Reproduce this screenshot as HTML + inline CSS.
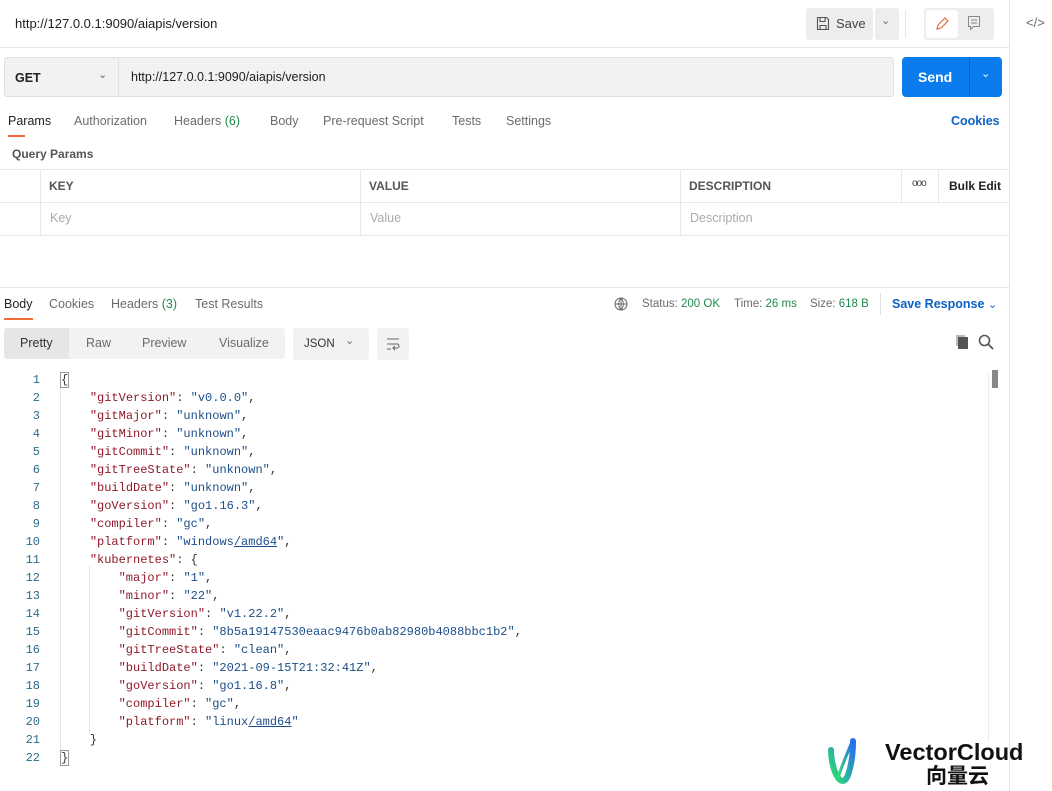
<!DOCTYPE html>
<html><head><meta charset="utf-8"><style>
*{box-sizing:border-box;margin:0;padding:0}
body{width:1052px;height:791px;background:#fff;font-family:"Liberation Sans",sans-serif;font-size:12.5px;color:#212121;position:relative;overflow:hidden}
.a{position:absolute;white-space:nowrap}
.g{color:#6b6b6b}
.code{font-family:"Liberation Mono",monospace;font-size:12px}
.k{color:#8f1a2a}.v{color:#1c4e88}
</style></head><body>
<div class="a" style="left:1009px;top:0;width:1px;height:791px;background:#e6e6e6"></div>
<div class="a g" style="left:1026px;top:15px;font-size:13px">&lt;/&gt;</div>
<div class="a" style="left:15px;top:16px;font-size:13px;color:#212121">http://127.0.0.1:9090/aiapis/version</div>
<div class="a" style="left:806px;top:8px;width:67px;height:32px;background:#ededed;border-radius:3px"></div>
<svg class="a" style="left:816px;top:16px" width="14" height="15" viewBox="0 0 14 15"><path d="M1.5 1.5h9l2 2v10h-11z M4 1.5v4h5v-4 M4 13.5v-4h6v4" fill="none" stroke="#555" stroke-width="1.1"/></svg>
<div class="a" style="left:836px;top:16px;color:#444;font-size:13px">Save</div>
<div class="a" style="left:875px;top:8px;width:24px;height:32px;background:#ededed;border-radius:3px"></div>
<div class="a g" style="left:881px;top:14px;font-size:11px">&#8964;</div>
<div class="a" style="left:905px;top:10px;width:1px;height:28px;background:#e6e6e6"></div>
<div class="a" style="left:924px;top:8px;width:70px;height:32px;background:#ededed;border-radius:3px"></div>
<div class="a" style="left:926px;top:10px;width:32px;height:28px;background:#fff;border-radius:3px"></div>
<svg class="a" style="left:934px;top:16px" width="16" height="16"><path d="M3 13l1-4 7-7 3 3-7 7z" fill="none" stroke="#e0703a" stroke-width="1.2"/></svg>
<svg class="a" style="left:967px;top:15px" width="14" height="16"><path d="M1.5 1.5h11v10h-6l-3 3v-3h-2z M4 5h6 M4 8h6" fill="none" stroke="#888" stroke-width="1"/></svg>
<div class="a" style="left:0;top:47px;width:1009px;height:1px;background:#e6e6e6"></div>
<div class="a" style="left:4px;top:57px;width:890px;height:40px;background:#f2f2f2;border:1px solid #e0e0e0;border-radius:3px"></div>
<div class="a" style="left:118px;top:58px;width:1px;height:38px;background:#e0e0e0"></div>
<div class="a" style="left:15px;top:71px;font-weight:bold;font-size:12.5px">GET</div>
<div class="a g" style="left:98px;top:68px;font-size:11px">&#8964;</div>
<div class="a" style="left:131px;top:70px;font-size:12.5px">http://127.0.0.1:9090/aiapis/version</div>
<div class="a" style="left:902px;top:57px;width:100px;height:40px;background:#0a7ced;border-radius:4px"></div>
<div class="a" style="left:969px;top:57px;width:1px;height:40px;background:#0664c8"></div>
<div class="a" style="left:918px;top:69px;color:#fff;font-weight:bold;font-size:14px">Send</div>
<div class="a" style="left:981px;top:67px;color:#fff;font-size:11px">&#8964;</div>
<div class="a" style="left:8px;top:114px">Params</div>
<div class="a" style="left:8px;top:135px;width:17px;height:2px;background:#f26b3a"></div>
<div class="a g" style="left:74px;top:114px">Authorization</div>
<div class="a g" style="left:174px;top:114px">Headers <span style="color:#1f8b4c">(6)</span></div>
<div class="a g" style="left:270px;top:114px">Body</div>
<div class="a g" style="left:323px;top:114px">Pre-request Script</div>
<div class="a g" style="left:452px;top:114px">Tests</div>
<div class="a g" style="left:506px;top:114px">Settings</div>
<div class="a" style="left:951px;top:114px;color:#0b62c4;font-weight:bold">Cookies</div>
<div class="a" style="left:12px;top:147px;font-weight:bold;color:#555;font-size:12px">Query Params</div>
<div class="a" style="left:0;top:169px;width:1009px;height:67px;border-top:1px solid #e6e6e6;border-bottom:1px solid #e6e6e6"></div>
<div class="a" style="left:0;top:202px;width:1009px;height:1px;background:#e6e6e6"></div>
<div class="a" style="left:40px;top:169px;width:1px;height:67px;background:#e6e6e6"></div>
<div class="a" style="left:360px;top:169px;width:1px;height:67px;background:#e6e6e6"></div>
<div class="a" style="left:680px;top:169px;width:1px;height:67px;background:#e6e6e6"></div>
<div class="a" style="left:901px;top:169px;width:1px;height:33px;background:#e6e6e6"></div>
<div class="a" style="left:938px;top:169px;width:1px;height:33px;background:#e6e6e6"></div>
<div class="a" style="left:49px;top:179px;color:#555;font-weight:bold;font-size:12px">KEY</div>
<div class="a" style="left:369px;top:179px;color:#555;font-weight:bold;font-size:12px">VALUE</div>
<div class="a" style="left:689px;top:179px;color:#555;font-weight:bold;font-size:12px">DESCRIPTION</div>
<div class="a" style="left:912px;top:178px;color:#444;font-size:10px;letter-spacing:-1px">ooo</div>
<div class="a" style="left:949px;top:179px;font-weight:bold;font-size:12px">Bulk Edit</div>
<div class="a" style="left:50px;top:211px;color:#aaa">Key</div>
<div class="a" style="left:370px;top:211px;color:#aaa">Value</div>
<div class="a" style="left:690px;top:211px;color:#aaa">Description</div>
<div class="a" style="left:0;top:287px;width:1009px;height:1px;background:#e6e6e6"></div>
<div class="a" style="left:4px;top:297px">Body</div>
<div class="a" style="left:4px;top:318px;width:29px;height:2px;background:#f26b3a"></div>
<div class="a g" style="left:49px;top:297px">Cookies</div>
<div class="a g" style="left:111px;top:297px">Headers <span style="color:#1f8b4c">(3)</span></div>
<div class="a g" style="left:195px;top:297px">Test Results</div>
<svg class="a" style="left:614px;top:297px" width="14" height="14"><circle cx="7" cy="7" r="6" fill="none" stroke="#666"/><path d="M1 7h12M7 1v12M7 1c-3 3-3 9 0 12M7 1c3 3 3 9 0 12" fill="none" stroke="#666" stroke-width=".9"/></svg>
<div class="a g" style="left:642px;top:298px;font-size:11.5px">Status: <span style="color:#1f8b4c">200 OK</span></div>
<div class="a g" style="left:734px;top:298px;font-size:11.5px">Time: <span style="color:#1f8b4c">26 ms</span></div>
<div class="a g" style="left:810px;top:298px;font-size:11.5px">Size: <span style="color:#1f8b4c">618 B</span></div>
<div class="a" style="left:880px;top:293px;width:1px;height:22px;background:#e0e0e0"></div>
<div class="a" style="left:892px;top:297px;color:#0b62c4;font-weight:bold">Save Response <span style="font-weight:normal;font-size:11px">&#8964;</span></div>
<div class="a" style="left:4px;top:328px;width:281px;height:31px;background:#f2f2f2;border-radius:3px"></div>
<div class="a" style="left:4px;top:328px;width:65px;height:31px;background:#e6e6e6;border-radius:3px 0 0 3px"></div>
<div class="a" style="left:20px;top:336px;color:#333">Pretty</div>
<div class="a g" style="left:86px;top:336px">Raw</div>
<div class="a g" style="left:142px;top:336px">Preview</div>
<div class="a g" style="left:219px;top:336px">Visualize</div>
<div class="a" style="left:293px;top:328px;width:76px;height:32px;background:#f2f2f2;border-radius:3px"></div>
<div class="a" style="left:304px;top:338px;font-size:11.5px;color:#333">JSON</div>
<div class="a g" style="left:345px;top:334px;font-size:11px">&#8964;</div>
<div class="a" style="left:377px;top:328px;width:32px;height:32px;background:#f2f2f2;border-radius:3px"></div>
<svg class="a" style="left:385px;top:336px" width="16" height="16"><path d="M2 3h12M2 8h10a2 2 0 0 1 0 4H8M10 10l-2 2 2 2M2 13h4" fill="none" stroke="#666" stroke-width="1.1"/></svg>
<svg class="a" style="left:954px;top:334px" width="16" height="16"><rect x="2" y="1" width="9" height="11" fill="#bbb"/><rect x="4" y="3" width="10" height="12" fill="#555"/></svg>
<svg class="a" style="left:978px;top:334px" width="16" height="16"><circle cx="6.5" cy="6.5" r="5" fill="none" stroke="#555" stroke-width="1.6"/><path d="M10 10l5 5" stroke="#555" stroke-width="1.8"/></svg>
<div class="a" style="left:60px;top:372px;width:1px;height:395px;background:#e6e6e6"></div>
<div class="a" style="left:89px;top:566px;width:1px;height:168px;background:#e6e6e6"></div>
<div class="a" style="left:988px;top:372px;width:1px;height:370px;background:#ececec"></div>
<div class="a" style="left:992px;top:370px;width:6px;height:18px;background:#888"></div>
<div class="a code" style="left:0;top:371px;line-height:18px">
<div style="position:relative">
<pre class="code" style="position:absolute;left:20px;width:20px;text-align:right;color:#2f6b8a">1
2
3
4
5
6
7
8
9
10
11
12
13
14
15
16
17
18
19
20
21
22</pre>
<pre class="code" style="position:absolute;left:61px;color:#333"><span style="outline:1px solid #999">{</span>
    <span class="k">"gitVersion"</span>: <span class="v">"v0.0.0"</span>,
    <span class="k">"gitMajor"</span>: <span class="v">"unknown"</span>,
    <span class="k">"gitMinor"</span>: <span class="v">"unknown"</span>,
    <span class="k">"gitCommit"</span>: <span class="v">"unknown"</span>,
    <span class="k">"gitTreeState"</span>: <span class="v">"unknown"</span>,
    <span class="k">"buildDate"</span>: <span class="v">"unknown"</span>,
    <span class="k">"goVersion"</span>: <span class="v">"go1.16.3"</span>,
    <span class="k">"compiler"</span>: <span class="v">"gc"</span>,
    <span class="k">"platform"</span>: <span class="v">"windows<u>/amd64</u>"</span>,
    <span class="k">"kubernetes"</span>: {
        <span class="k">"major"</span>: <span class="v">"1"</span>,
        <span class="k">"minor"</span>: <span class="v">"22"</span>,
        <span class="k">"gitVersion"</span>: <span class="v">"v1.22.2"</span>,
        <span class="k">"gitCommit"</span>: <span class="v">"8b5a19147530eaac9476b0ab82980b4088bbc1b2"</span>,
        <span class="k">"gitTreeState"</span>: <span class="v">"clean"</span>,
        <span class="k">"buildDate"</span>: <span class="v">"2021-09-15T21:32:41Z"</span>,
        <span class="k">"goVersion"</span>: <span class="v">"go1.16.8"</span>,
        <span class="k">"compiler"</span>: <span class="v">"gc"</span>,
        <span class="k">"platform"</span>: <span class="v">"linux<u>/amd64</u>"</span>
    }
<span style="outline:1px solid #999">}</span></pre>
</div></div>
<div class="a" style="left:826px;top:738px;width:72px;height:53px;background:#fff"></div>
<svg class="a" style="left:824px;top:738px" width="40" height="50"><defs><linearGradient id="lg" x1="0" y1="1" x2="1" y2="0"><stop offset="0" stop-color="#2de36a"/><stop offset="1" stop-color="#2a6df0"/></linearGradient></defs><path d="M7 12c0 12 4 26 9 30 4 3 7-1 9-8 3-10 4-20 4-31" fill="none" stroke="url(#lg)" stroke-width="6" stroke-linecap="round"/><path d="M14 40c3-10 8-22 14-36" fill="none" stroke="url(#lg)" stroke-width="3"/></svg>
<div class="a" style="left:885px;top:739px;font-weight:bold;font-size:23.5px;color:#111">VectorCloud</div>
<div class="a" style="left:926px;top:764px;font-weight:bold;font-size:21px;color:#111;font-family:'Noto Sans CJK SC',sans-serif;line-height:22px">向量云</div>
</body></html>
